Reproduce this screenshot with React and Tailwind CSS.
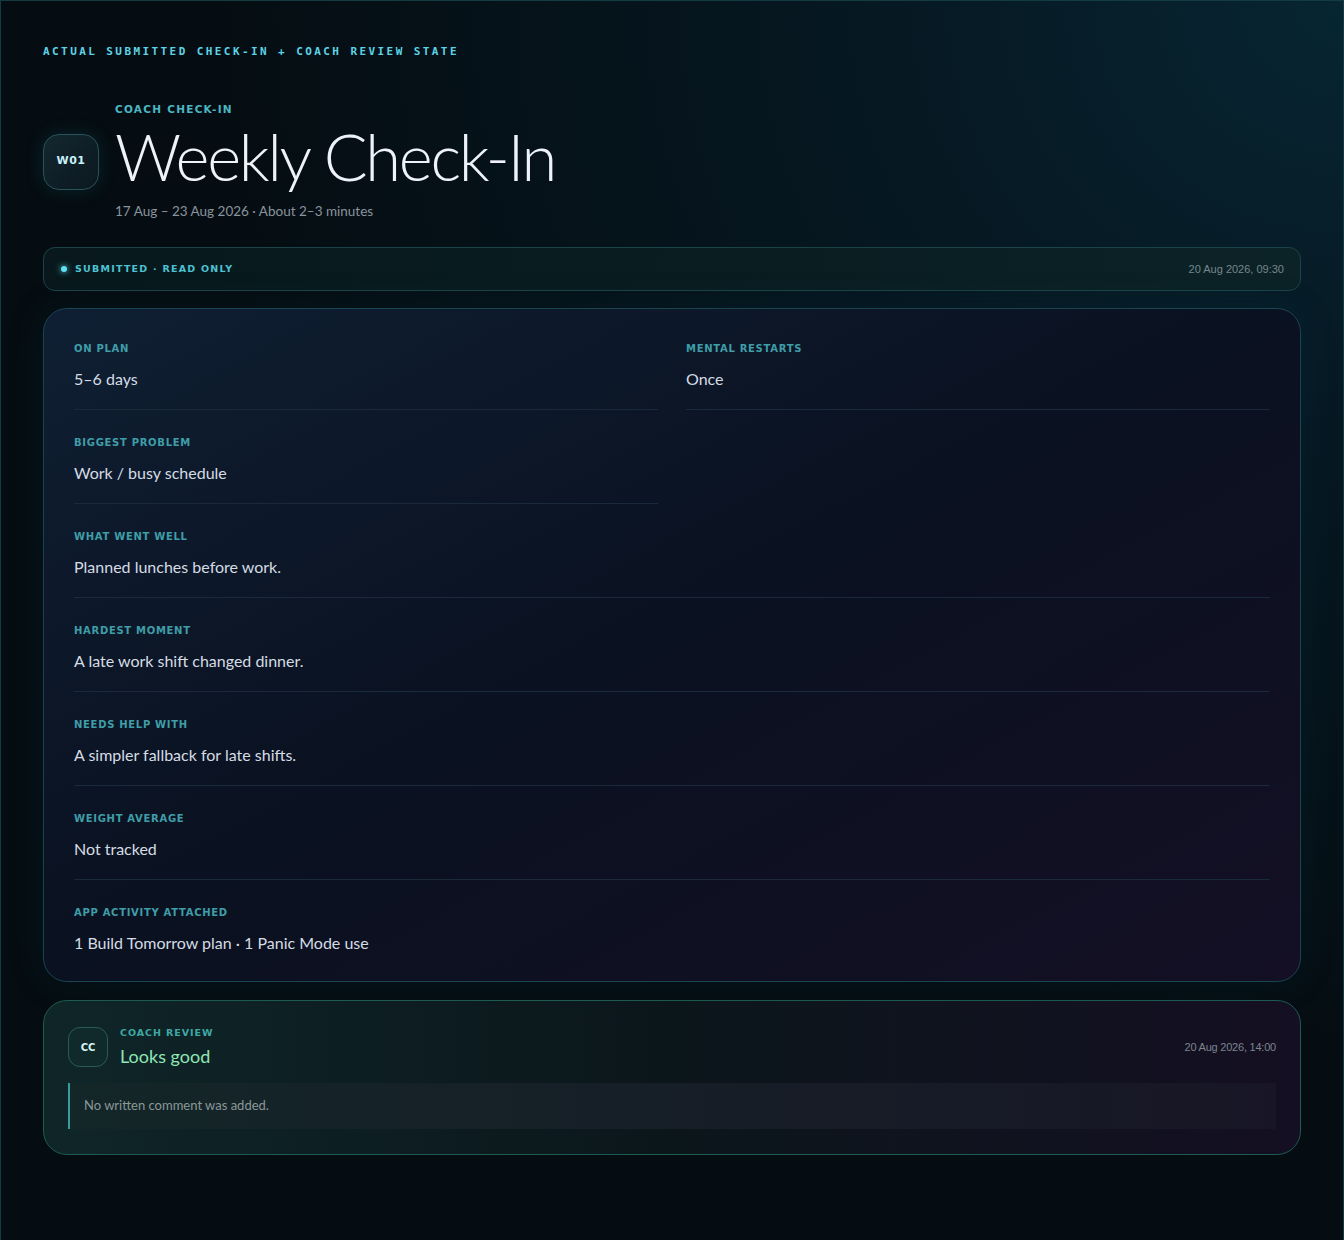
const items = [
  { label: "On plan", value: "5–6 days", half: true },
  { label: "Mental restarts", value: "Once", half: true },
  { label: "Biggest problem", value: "Work / busy schedule", half: true },
  { label: "What went well", value: "Planned lunches before work." },
  { label: "Hardest moment", value: "A late work shift changed dinner." },
  { label: "Needs help with", value: "A simpler fallback for late shifts." },
  { label: "Weight average", value: "Not tracked" },
  { label: "App activity attached", value: "1 Build Tomorrow plan · 1 Panic Mode use", last: true },
];

const labelFont = { fontFamily: '"DejaVu Sans", sans-serif' };

const Field = ({ label, value, half, last, first }) => (
  <div
    className={`${half ? "col-span-1" : "col-span-2"} ${first ? "" : "pt-[26px]"} ${
      last ? "" : "pb-[18px] border-b border-[#1b2a3a]"
    }`}
  >
    <div
      className="text-[10px] leading-[14px] font-bold uppercase tracking-[0.07em] text-[#3f9ea8]"
      style={labelFont}
    >
      {label}
    </div>
    <div className="mt-[11px] text-[16px] leading-[24px] text-[#d5dce4]">{value}</div>
  </div>
);

export default function App() {
  return (
    <div
      className="min-h-screen border border-[#123b42] bg-[#050d12] bg-[radial-gradient(ellipse_at_top_right,#072532_0%,#061822_25%,#050d12_60%)] px-[42px] pt-[44px] pb-[86px]"
      style={{ fontFamily: 'Lato, "Noto Sans", sans-serif' }}
    >
      <div
        className="text-[11px] leading-[14px] font-bold uppercase tracking-[0.22em] text-[#5ed3e6]"
        style={{ fontFamily: '"DejaVu Sans Mono", monospace' }}
      >
        Actual submitted check-in + coach review state
      </div>

      <div className="mt-[43px] flex items-center gap-4">
        <div className="flex h-14 w-14 shrink-0 items-center justify-center rounded-2xl border border-[#29535c] bg-gradient-to-br from-[#14272f] to-[#0b1820] shadow-[0_0_18px_rgba(40,140,160,0.18)]">
          <span className="text-[11px] font-bold tracking-[0.05em] text-[#c9f1f8]" style={labelFont}>
            W01
          </span>
        </div>
        <div>
          <div
            className="text-[10.5px] leading-[14px] font-bold uppercase tracking-[0.12em] text-[#4cb7c3]"
            style={labelFont}
          >
            Coach check-in
          </div>
          <h1 className="mt-[4px] text-[65px] leading-[72px] font-light tracking-[-0.035em] text-[#eef2fb]">
            Weekly Check-In
          </h1>
          <div className="mt-[9px] text-[13.5px] leading-[20px] text-[#8a949e]">
            17 Aug – 23 Aug 2026 · About 2–3 minutes
          </div>
        </div>
      </div>

      <div className="mt-[26px] flex h-[44px] items-center justify-between rounded-xl border border-[#1b4448] bg-gradient-to-r from-[#08181c] to-[#0b2226] px-4">
        <div className="flex items-center gap-2">
          <span className="ml-[1px] h-[6px] w-[6px] rounded-full bg-[#5fe3f2] shadow-[0_0_6px_#5fe3f2]" />
          <span
            className="text-[9.5px] font-bold uppercase tracking-[0.13em] text-[#4cc2d2]"
            style={labelFont}
          >
            Submitted · Read only
          </span>
        </div>
        <span className="text-[11px] text-[#76878e]" style={{ fontFamily: '"Liberation Sans", sans-serif' }}>
          20 Aug 2026, 09:30
        </span>
      </div>

      <div className="mt-[17px] rounded-[24px] border border-[#1a4450] bg-gradient-to-br from-[#0f1f33] via-[#0a1120] to-[#140f24] px-[30px] pt-[33px] pb-[26px] shadow-[0_0_40px_rgba(0,80,100,0.12)]">
        <div className="grid grid-cols-2 gap-x-[28px]">
          {items.map((it, i) => (
            <Field key={it.label} {...it} first={i < 2} />
          ))}
        </div>
      </div>

      <div className="mt-[18px] rounded-[24px] border border-[#1d5a52] bg-gradient-to-r from-[#0f2629] via-[#0b161b] to-[#140f22] px-6 pt-[26px] pb-[25px]">
        <div className="flex items-start justify-between">
          <div className="flex items-center gap-3">
            <div className="flex h-10 w-10 items-center justify-center rounded-xl border border-[#2a5a58] bg-[#102a2c]">
              <span className="text-[10px] font-bold text-[#d6f5f2]" style={labelFont}>
                CC
              </span>
            </div>
            <div>
              <div
                className="text-[9.5px] leading-[12px] font-bold uppercase tracking-[0.1em] text-[#3fa8a4]"
                style={labelFont}
              >
                Coach review
              </div>
              <div className="mt-[6px] text-[18px] leading-[22px] text-[#8fe6b4]">Looks good</div>
            </div>
          </div>
          <span
            className="mt-[12px] text-[11px] tracking-[-0.02em] text-[#7c8490]"
            style={{ fontFamily: '"Liberation Sans", sans-serif' }}
          >
            20 Aug 2026, 14:00
          </span>
        </div>
        <div className="mt-[16px] flex h-[46px] items-center border-l-2 border-[#3a9c9a] bg-gradient-to-r from-[#132628] to-[#181626] px-[14px]">
          <span className="text-[13px] text-[#8b9898]">No written comment was added.</span>
        </div>
      </div>
    </div>
  );
}
